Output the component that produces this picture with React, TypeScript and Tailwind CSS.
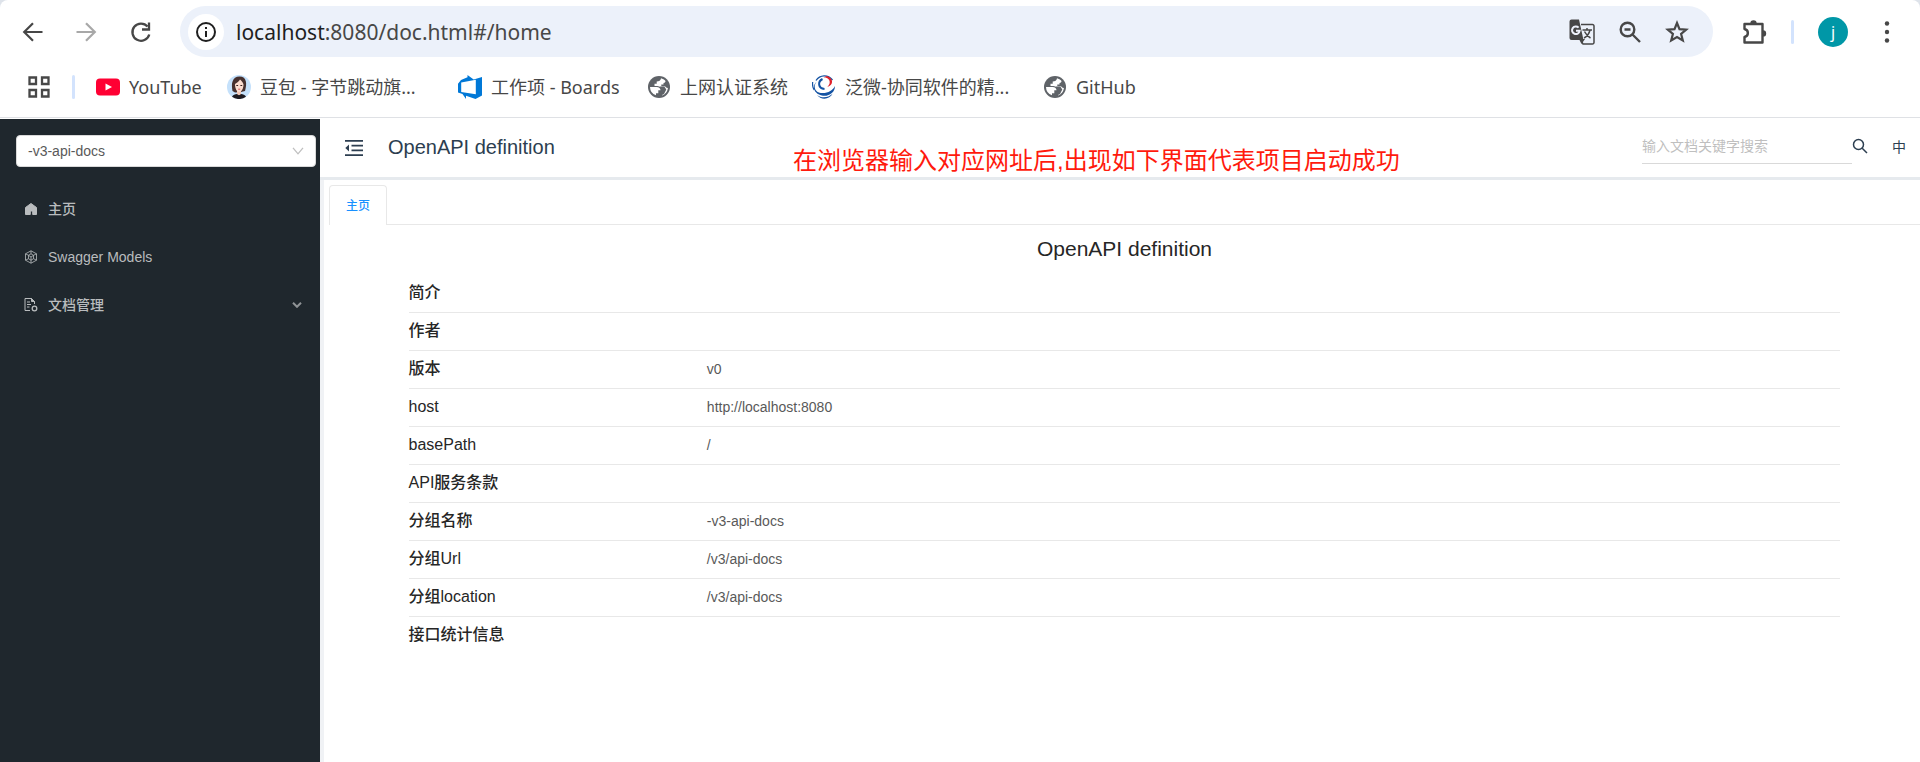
import { FC, ReactNode } from 'react'

const menuItems = [
  { id: 'home', label: '主页' },
  { id: 'models', label: 'Swagger Models' },
  { id: 'docs', label: '文档管理', expandable: true },
]

const rows = [
  { label: '简介', value: '' },
  { label: '作者', value: '' },
  { label: '版本', value: 'v0' },
  { label: 'host', value: 'http://localhost:8080' },
  { label: 'basePath', value: '/' },
  { label: 'API服务条款', value: '' },
  { label: '分组名称', value: '-v3-api-docs' },
  { label: '分组Url', value: '/v3/api-docs' },
  { label: '分组location', value: '/v3/api-docs' },
  { label: '接口统计信息', value: '' },
]

const BackIcon: FC<{ flip?: boolean }> = ({ flip }) => (
  <svg viewBox="0 0 24 24" className={ flip ? 'h-6 w-6 rotate-180' : 'h-6 w-6' } fill="none" stroke="currentColor" strokeWidth="2.2">
    <path d="M21.5 12H4M12 3.2 3.2 12l8.8 8.8" />
  </svg>
)

const ReloadIcon: FC = () => (
  <svg viewBox="0 0 24 24" className="h-6 w-6" fill="none" stroke="currentColor" strokeWidth="2.3">
    <path d="M18.6 6.6A8.6 8.6 0 1 0 20.3 14.5" />
    <path d="M20 2.5v7h-7" />
  </svg>
)

const InfoIcon: FC = () => (
  <svg viewBox="0 0 24 24" className="h-6 w-6" fill="none" stroke="currentColor" strokeWidth="2">
    <circle cx="12" cy="12" r="9" />
    <path d="M12 11v6M12 7v2" />
  </svg>
)

const TranslateIcon: FC = () => (
  <svg viewBox="0 0 26 26" className="h-[26px] w-[26px]" fill="none">
    <path d="M12 5.5h11.5a1.5 1.5 0 0 1 1.5 1.5v16.5a1.5 1.5 0 0 1-1.5 1.5H14l-2-4" stroke="#474747" strokeWidth="1.5" />
    <path d="M2.5.5H10l4.5 20.5h-12A2 2 0 0 1 .5 19V2.5a2 2 0 0 1 2-2Z" fill="#474747" />
    <path d="M10 20h6l-3.5 5Z" fill="#474747" />
    <path d="M9.6 8.6A3.8 3.8 0 1 0 10.6 11.8H7" stroke="#edf1fa" strokeWidth="2" />
    <path d="M13.5 11h9.5M18 9v2M21 11c-.8 3.5-3 6.5-6 8M15.5 12.5c1.5 3 3.5 5 6 6.5" stroke="#474747" strokeWidth="1.5" />
  </svg>
)

const ZoomOutIcon: FC = () => (
  <svg viewBox="0 0 24 24" className="h-6 w-6" fill="none" stroke="currentColor" strokeWidth="2.4">
    <circle cx="9.5" cy="9.5" r="6.8" />
    <path d="m14.5 14.5 7.5 7.5M6.5 9.5h6" />
  </svg>
)

const StarIcon: FC = () => (
  <svg viewBox="0 0 24 24" className="h-6 w-6" fill="none" stroke="currentColor" strokeWidth="2.2">
    <path d="m12 3 2.5 6.2 6.7.5-5.1 4.3 1.7 6.5L12 17l-5.8 3.5L7.9 14 2.8 9.7l6.7-.5Z" />
  </svg>
)

const PuzzleIcon: FC = () => (
  <svg viewBox="0 0 26 26" className="h-[26px] w-[26px]">
    <path d="M3.5 5h18v18.5h-18v-5.5c4.5-1 4.5-7 0-8Z" fill="none" stroke="#474747" strokeWidth="2.4" strokeLinejoin="round" />
    <path d="M9.3 4.5a3.2 3.2 0 0 1 6.4 0ZM22 11.2a3.2 3.2 0 0 1 0 6.4Z" fill="#474747" />
  </svg>
)

const YouTubeIcon: FC = () => (
  <svg viewBox="0 0 24 24" className="h-6 w-6">
    <rect x="0" y="3.5" width="24" height="17" rx="4" fill="#ff0033" />
    <path d="M9.5 8.5v7l6.5-3.5Z" fill="#fff" />
  </svg>
)

const AvatarIcon: FC = () => (
  <svg viewBox="0 0 24 24" className="h-6 w-6">
    <circle cx="12" cy="12" r="12" fill="#c5e1fb" />
    <path d="M5.5 16C4 9 5 1.5 12.5 1.5S20 9 18 16l-4 1-6 .5Z" fill="#46302e" />
    <path d="M10 15h4v5h-4Z" fill="#f3c9b8" />
    <path d="M8 9c2-1 4-3 5-4.5 1.5 1 3 3 3.5 5 0 4-2 7.5-4.3 7.5S8 13.5 8 9Z" fill="#fbdccf" />
    <path d="M9.3 10.5h1.8M13.4 10.5h1.8" stroke="#35211f" strokeWidth="1.2" />
    <path d="M11.2 14.2h2" stroke="#d8575a" strokeWidth="1" />
    <path d="M5 21.8c1-2 3-2.8 5-2.8 1 1.5 3 1.5 4 0 2 0 4 .8 5 2.8A12 12 0 0 1 5 21.8Z" fill="#1d1a20" />
  </svg>
)

const BoardsIcon: FC = () => (
  <svg viewBox="0 0 24 24" className="h-6 w-6">
    <path d="M0 8.8 3 5l6.5-2.8V0l6.2 4.5L24 2v18.5L17.5 24 8 20.8V24l-3.5-5L0 17.5Z" fill="#0078d7" />
    <path d="M3.2 7.5 17.8 4.8v14.5L3.2 17Z" fill="#fff" />
  </svg>
)

const GlobeIcon: FC = () => (
  <svg viewBox="0 0 24 24" className="h-6 w-6">
    <circle cx="12" cy="12" r="11" fill="#5f6368" />
    <path d="M3 12h6.500c2.700 0 4 1.300 4 3.300h-2.200v3H9v2A9 9 0 0 1 3 12Z" fill="#fff" />
    <path d="M14 3.300c1.500.3 3.500 1.500 4.500 2.700 0 1.200-.8 2-2 2v1.500h-2.200v1.700h3.200c1.200 0 1.500 1.800 3.400 1.800-.3 3.500-2.800 6.500-5.900 7.500v-2.200h1.500c1-1 1-3 0-4-1.500-1.500-3.500-3-6-3.300H7.500V8.800h2.200V6.600c2.300 0 4.300-1.300 4.300-3.300Z" fill="#fff" />
    <path d="M12.800 11.500h4.500l2 3-2.300 4.500-3 1.500-1.500-2 2-3Z" fill="#5f6368" />
  </svg>
)

const WeaverIcon: FC = () => (
  <svg viewBox="0 0 24 24" className="h-6 w-6" fill="none">
    <path d="M4 5.5C8-.5 16-.8 20.5 5" stroke="#1453a3" strokeWidth="1.3" />
    <path d="M11.5 2.2c6 .3 8.500 5.300 3.800 9.800 6.700-2 6.200-9-.3-11Z" fill="#e0202a" />
    <path d="M5.500 6C.5 10.500 2.500 17 9 18c6 .8 12-2.500 14-7 .2 6-5.500 10.500-12 9.800C1.500 19.500-1 10.500 5.500 6Z" fill="#1453a3" />
    <path d="M10.500 4C5.500 6.500 6 13.500 12.500 14" stroke="#1453a3" strokeWidth="2" />
    <path d="M.7 7c-.5 3 0 5.500 1.500 8" stroke="#1453a3" strokeWidth="1.200" />
    <path d="M5 20c4.500 3.500 11 3 15.500-1.200C18 24.500 9 25.500 5 20Z" fill="#1453a3" />
  </svg>
)

const HomeIcon: FC = () => (
  <svg viewBox="0 0 14 14" className="h-3.5 w-3.5" fill="currentColor">
    <path d="M7 1.5 12.5 5.5v7H8.700V9H6.300v3.500H1.500v-7Z" strokeLinejoin="round" stroke="currentColor" strokeWidth="1" />
  </svg>
)

const ModelsIcon: FC = () => (
  <svg viewBox="0 0 14 14" className="h-3.5 w-3.5" fill="none" stroke="currentColor" strokeWidth=".8">
    <path d="m7 .8 5.500 3v6.400L7 13.200l-5.500-3V3.800ZM7 .8v3M1.500 3.800l3 1.500M12.500 3.800l-3 1.500M1.500 10.200l3-1.500M12.500 10.200l-3-1.500M7 13.200V10" />
    <path d="m7 3.800 2.500 1.500v3.400L7 10.200 4.500 8.700V5.300ZM4.500 5.300 7 7l2.500-1.700M7 7v3" />
  </svg>
)

const DocsIcon: FC = () => (
  <svg viewBox="0 0 14 14" className="h-3.5 w-3.5" fill="none" stroke="currentColor">
    <path d="M6 12.500H1v-12h6.500l3 3V6M3 4h3M3 6.500h4M3 9h2.500" />
    <path d="M7.500.5v3h3Z" fill="currentColor" />
    <circle cx="10.500" cy="10.500" r="2.300" strokeWidth="1.300" />
  </svg>
)

const FoldIcon: FC = () => (
  <svg viewBox="0 0 18 16" className="h-4 w-[18px]">
    <path d="M0 .9h18M6.500 5.600H18M6.500 10.400H18M0 15.100h18" stroke="#2c3e50" strokeWidth="1.700" />
    <path d="M4 4.500v7L.3 8Z" fill="#2c3e50" />
  </svg>
)

const SearchIcon: FC = () => (
  <svg viewBox="0 0 16 16" className="h-4 w-4" fill="none" stroke="#2c3e50" strokeWidth="1.500">
    <circle cx="6.500" cy="6.500" r="5" />
    <path d="m10.200 10.200 4.800 4.800" />
  </svg>
)

const menuIcons: Record<string, ReactNode> = {
  home: <HomeIcon />,
  models: <ModelsIcon />,
  docs: <DocsIcon />,
}

interface BookmarkProps {
  icon: ReactNode
  title: string
  className?: string
}

const Bookmark: FC<BookmarkProps> = ({ icon, title, className = '' }) => (
  <a href="#" className={ `flex shrink-0 items-center gap-[9px] whitespace-nowrap ${ className }` }>
    { icon }
    <span>{ title }</span>
  </a>
)

const BrowserBar: FC = () => (
  <div className="bg-[#dee3ea] font-['Noto_Sans','Noto_Sans_CJK_SC',sans-serif] text-[#474747]">
    <div className="rounded-t-lg border-b border-[#dfe1e5] bg-white">

      <div className="flex items-center px-[21px] pt-1.5">
        <button aria-label="Back" className="mr-[29px]"><BackIcon /></button>
        <button aria-label="Forward" className="mr-[31px] text-[#a8a8a8]"><BackIcon flip /></button>
        <button aria-label="Reload" className="mr-[27px]"><ReloadIcon /></button>

        <div className="flex h-[51px] flex-1 items-center rounded-full bg-[#ecf1fa] pr-6 pl-2">
          <span className="grid h-9 w-9 place-items-center rounded-full bg-white text-[#1f1f1f]"><InfoIcon /></span>
          <p className="ml-3 flex-1 text-[21px] leading-8"><span className="text-[#1f1f1f]">localhost</span>:8080/doc.html#/home</p>
          <div className="flex items-center gap-[23px]">
            <button aria-label="Translate"><TranslateIcon /></button>
            <button aria-label="Zoom"><ZoomOutIcon /></button>
            <button aria-label="Bookmark this page"><StarIcon /></button>
          </div>
        </div>

        <button aria-label="Extensions" className="ml-7"><PuzzleIcon /></button>
        <span className="ml-6 h-6 w-[3px] rounded-full bg-[#d3e3fd]" />
        <button aria-label="Profile" className="ml-6 h-[30px] w-[30px] rounded-full bg-[#0097a7] text-base leading-[30px] text-white">j</button>
        <button aria-label="Menu" className="ml-[27px] grid w-6 place-items-center">
          <svg viewBox="0 0 6 24" className="h-6 w-1.5" fill="currentColor">
            <circle cx="3" cy="3.500" r="2.200" /><circle cx="3" cy="12" r="2.200" /><circle cx="3" cy="20.500" r="2.200" />
          </svg>
        </button>
      </div>

      <nav className="flex h-[60px] items-center pl-7 text-lg">
        <button aria-label="Apps">
          <svg viewBox="0 0 22 22" className="h-[22px] w-[22px]" fill="none" stroke="currentColor" strokeWidth="2.300">
            <path d="M1.500 1.500h6.500v6.500H1.500ZM14 1.500h6.500v6.500H14ZM1.500 14h6.500v6.500H1.500ZM14 14h6.500v6.500H14Z" />
          </svg>
        </button>
        <span className="mr-[21px] ml-[22px] h-6 w-[3px] rounded-full bg-[#d3e3fd]" />
        <Bookmark icon={ <YouTubeIcon /> } title="YouTube" className="w-[131px]" />
        <Bookmark icon={ <AvatarIcon /> } title="豆包 - 字节跳动旗..." className="w-[231px]" />
        <Bookmark icon={ <BoardsIcon /> } title="工作项 - Boards" className="w-[189px]" />
        <Bookmark icon={ <GlobeIcon /> } title="上网认证系统" className="w-[165px]" />
        <Bookmark icon={ <WeaverIcon /> } title="泛微-协同软件的精..." className="w-[231px]" />
        <Bookmark icon={ <GlobeIcon /> } title="GitHub" />
      </nav>

    </div>
  </div>
)

const Sidebar: FC = () => (
  <aside className="w-80 shrink-0 bg-[#1f272d] pt-4 text-sm font-medium text-[#b9bcbe]">

    <div className="relative mr-1 ml-4">
      <select aria-label="Group" className="h-8 w-full appearance-none rounded border border-[#d9d9d9] bg-white px-[11px] text-sm text-[#595959]">
        <option>-v3-api-docs</option>
      </select>
      <svg viewBox="0 0 12 8" className="pointer-events-none absolute top-3 right-3 h-2 w-3" fill="none" stroke="#bfbfbf" strokeWidth="1.300">
        <path d="m1 .8 5 6 5-6" />
      </svg>
    </div>

    <ul className="mt-[18px]">
      { menuItems.map( item => (
        <li key={ item.id }>
          <a href="#" className="flex h-12 items-center gap-2.5 pr-[18px] pl-6">
            { menuIcons[item.id] }
            <span className="flex-1">{ item.label }</span>
            { item.expandable && (
              <svg viewBox="0 0 10 6" className="h-1.5 w-2.5" fill="none" stroke="#8f9396" strokeWidth="2">
                <path d="m1 .8 4 4 4-4" />
              </svg>
            )}
          </a>
        </li>
      ))}
    </ul>

  </aside>
)

const Header: FC = () => (
  <header className="relative flex h-[61px] items-center border-b-[3px] border-[#e6eaee] pr-3.5 pl-[25px] text-[#2c3e50]">
    <button aria-label="Collapse menu"><FoldIcon /></button>
    <h1 className="mb-0.5 ml-[25px] flex-1 text-xl leading-6">OpenAPI definition</h1>
    <div className="mb-1 flex items-center">
      <input
        aria-label="Search"
        placeholder="输入文档关键字搜索"
        className="h-9 w-[210px] border-b border-[#d9d9d9] text-sm outline-none placeholder:text-[#bfbfbf]"
      />
      <button aria-label="Submit search"><SearchIcon /></button>
    </div>
    <button className="mb-0.5 ml-6 text-sm leading-5">中</button>

    <p className="absolute top-[26px] left-[473px] text-2xl leading-8 whitespace-nowrap text-[#ff1a0d]">
      在浏览器输入对应网址后,出现如下界面代表项目启动成功
    </p>
  </header>
)

const Home: FC = () => (
  <main className="ml-1 flex-1 bg-white pt-[5px] pl-[5px]">

    <div role="tablist" className="flex">
      <button role="tab" aria-selected="true" className="h-10 rounded-t border border-b-0 border-[#e8e8e8] px-4 text-xs font-medium text-[#1890ff]">主页</button>
      <span className="flex-1 border-b border-[#e8e8e8]" />
    </div>

    <section className="mx-[5%] text-[#262626]">
      <h2 className="pt-2 pb-[9px] text-center text-[21px] leading-8">OpenAPI definition</h2>
      <table className="w-full table-fixed">
        <tbody>
          { rows.map( row => (
            <tr key={ row.label } className="h-[38px] border-b border-[#e8e8e8] last:border-0">
              <th scope="row" className="w-[calc(500%/24)] text-left text-base leading-6 font-medium">{ row.label }</th>
              <td className="text-sm text-[#595959]">{ row.value }</td>
            </tr>
          ))}
        </tbody>
      </table>
    </section>

  </main>
)

export default function App() {
  return (
    <div className="flex min-h-screen flex-col bg-white">
      <BrowserBar />
      <div className="mt-px flex flex-1 font-['Liberation_Sans','Noto_Sans_CJK_SC',sans-serif]">
        <Sidebar />
        <div className="flex min-w-0 flex-1 flex-col bg-[#f0f2f5]">
          <div className="bg-white"><Header /></div>
          <Home />
        </div>
      </div>
    </div>
  )
}
